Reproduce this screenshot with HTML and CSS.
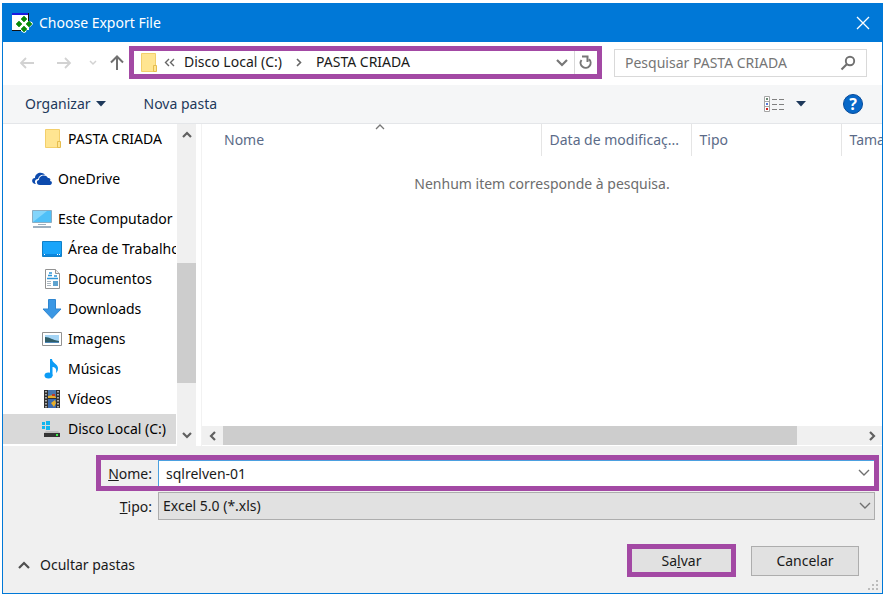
FILE: index.html
```html
<!DOCTYPE html>
<html lang="pt-BR">
<head>
    <meta charset="UTF-8">
    <meta name="viewport" content="width=device-width, initial-scale=1.0">
    <title>Choose Export File</title>
    <link rel="stylesheet" href="styles.css">
</head>
<body>
    <div class="dialog">
        <header class="titlebar">
            <svg width="22" height="20" viewBox="0 0 22 20">
                <path d="M0 0h17v17H0z" fill="#fff"/>
                <path d="M0 0h17v2H0z" fill="#1a1ae0"/>
                <path d="M16 0h1v8h-1zM0 17h9v1H0z" fill="#111"/>
                <path d="M12 2l3 2 1 4 4 1 1 2-3 3-3 1-1 4-2 1-3-2V8z" fill="#fff"/>
                <g fill="#0a8a0a">
                    <path d="M12 3l3 3-3 3-3-3zM7 8l3 3-3 3-3-3zM17 8l3 3-3 3-3-3zM12 13l3 3-3 3-3-3z" stroke="#0a8a0a" stroke-width=".6"/>
                </g>
            </svg>
            <h1>Choose Export File</h1>
            <button class="close" aria-label="Fechar">
                <svg width="14" height="14" viewBox="0 0 14 14"><path d="M1 1l12 12M13 1L1 13" stroke="#fff" stroke-width="1.3"/></svg>
            </button>
        </header>

        <nav class="navbar">
            <div class="history">
                <button class="go" aria-label="Voltar"><svg width="16" height="14" viewBox="0 0 16 14"><path d="M7 2L2 7l5 5M2 7h13" fill="none" stroke="#d2d2d2" stroke-width="1.800"/></svg></button>
                <button class="go" aria-label="Avançar"><svg width="16" height="14" viewBox="0 0 16 14"><path d="M9 2l5 5-5 5M14 7H1" fill="none" stroke="#d2d2d2" stroke-width="1.800"/></svg></button>
                <button class="recent" aria-label="Locais recentes"><svg width="8" height="6" viewBox="0 0 8 6"><path d="M1 1l3 3 3-3" fill="none" stroke="#d2d2d2" stroke-width="1.500"/></svg></button>
                <button class="up" aria-label="Acima"><svg width="16" height="16" viewBox="0 0 16 16"><path d="M2 7.500L8 1.500l6 6M8 2v13" fill="none" stroke="#707070" stroke-width="2"/></svg></button>
            </div>
            <div class="address highlight">
                <svg width="18" height="20" viewBox="0 0 18 20">
                    <path d="M1.500.500h14v18h-14z" fill="#ffe591" stroke="#f3cf6b"/>
                    <path d="M13.500 12.500h3v6h-3z" fill="#ffe591" stroke="#e5bd4f"/>
                </svg>
                <svg class="chev" width="11" height="9" viewBox="0 0 11 9"><path d="M5 1L1.500 4.500 5 8M10 1L6.500 4.500 10 8" fill="none" stroke="#666" stroke-width="1.400"/></svg>
                <a href="#">Disco Local (C:)</a>
                <svg class="sep" width="6" height="9" viewBox="0 0 6 9"><path d="M1 1l3.500 3.500L1 8" fill="none" stroke="#666" stroke-width="1.600"/></svg>
                <a href="#">PASTA CRIADA</a>
                <button class="drop" aria-label="Locais anteriores"><svg width="12" height="8" viewBox="0 0 12 8"><path d="M1 1l5 5 5-5" fill="none" stroke="#777" stroke-width="2.200"/></svg></button>
                <button class="refresh" aria-label="Atualizar"><svg width="14" height="15" viewBox="0 0 14 15"><path d="M2.500 5A5 5 0 1 0 10 4.200M3 1.500h5.500V7" fill="none" stroke="#777" stroke-width="2"/></svg></button>
            </div>
            <div class="search">
                <input type="text" placeholder="Pesquisar PASTA CRIADA" aria-label="Pesquisar PASTA CRIADA">
                <svg width="16" height="16" viewBox="0 0 16 16"><circle cx="10" cy="6" r="4.200" fill="none" stroke="#707070" stroke-width="1.900"/><path d="M7 9l-5.500 5.500" stroke="#707070" stroke-width="2.200"/></svg>
            </div>
        </nav>

        <div class="toolbar">
            <button class="organize">Organizar <svg width="10" height="6" viewBox="0 0 10 6"><path d="M0 0h10L5 5.500z" fill="#1e395b"/></svg></button>
            <button>Nova pasta</button>
            <button class="view" aria-label="Modo de exibição">
                <svg width="21" height="16" viewBox="0 0 21 16">
                    <path d="M1.500.500h5v15h-5zM1.500 5.500h5M1.500 10.500h5" fill="#fff" stroke="#a5a5a5"/>
                    <path d="M9 3.500h5M16 3.500h5M9 8.500h5M16 8.500h5M9 13.500h5M16 13.500h5" stroke="#808080"/>
                    <path d="M3 2h2v2H3z" fill="#6b8a75"/><path d="M3 7h2v2H3z" fill="#5577d8"/><path d="M3 12h2v2H3z" fill="#d02020"/>
                </svg>
                <svg width="10" height="6" viewBox="0 0 10 6"><path d="M0 0h10L5 5.500z" fill="#1e395b"/></svg>
            </button>
            <button class="help" aria-label="Ajuda">?</button>
        </div>

        <main class="browser">
            <ul class="tree">
                <li class="sub"><svg width="20" height="20" viewBox="0 0 20 20">
                    <path d="M3.500.500h14v18h-14z" fill="#ffe591" stroke="#f3cf6b"/>
                    <path d="M15.500 12.500h3v6h-3z" fill="#ffe591" stroke="#e5bd4f"/>
                </svg>PASTA CRIADA</li>
                <li class="root"><svg width="20" height="14" viewBox="0 0 20 14">
                    <path d="M4 12C-1 12-1 6 3 6c0-5 7-7 10-3-4-1-6 1-7 4-3 0-4 3-2 5z" fill="#0c4aad"/>
                    <path d="M8 13c-4 0-4-5-1-5 0-5 7-6 9-2 2 0 3 1 2 3 3 0 2 4 0 4z" fill="#0c4aad"/>
                </svg>OneDrive</li>
                <li class="root"><svg width="20" height="20" viewBox="0 0 20 20">
                    <path d="M.5 1.500h19v12H.5z" fill="#4fc0f8" stroke="#8badc2"/>
                    <path d="M1 13L15 2H1z" fill="#83d5fb"/>
                    <path d="M6 15h8v1H6zM1 17h18v2H1z" fill="#9eb0bf"/>
                </svg>Este Computador</li>
                <li class="sub"><svg width="20" height="16" viewBox="0 0 20 16">
                    <path d="M.5.500h19v15H.5z" fill="#1aa5fa" stroke="#1080c8"/>
                    <path d="M1 13h18v2H1z" fill="#0c86dd"/><path d="M2 13h1v1H2zM15 13h1v1h-1zM17 13h1v1h-1z" fill="#fff"/>
                </svg>Área de Trabalho</li>
                <li class="sub"><svg width="20" height="20" viewBox="0 0 20 20">
                    <path d="M3.500.500h10l4 4v15h-14z" fill="#fff" stroke="#929292"/>
                    <path d="M13.500.500v4h4" fill="#eee" stroke="#929292"/>
                    <path d="M7 4h3M6 6.500h4M12 7h3M5 9.500h11" stroke="#2d95d8" stroke-width="1.500"/>
                    <path d="M5 12.500h4M5 14.500h4M5 16.500h4" stroke="#aab6bf"/>
                    <path d="M11 12h5v5h-5z" fill="#5fa3cf"/>
                </svg>Documentos</li>
                <li class="sub"><svg width="20" height="20" viewBox="0 0 20 20"><path d="M6.500.500h7V10H19l-9 9.500L1 10h5.500z" fill="#3a97e4" stroke="#2f86d0"/></svg>Downloads</li>
                <li class="sub"><svg width="20" height="16" viewBox="0 0 20 16">
                    <path d="M.5 1.500h19v13H.5z" fill="#fff" stroke="#929292"/>
                    <path d="M3 4h14v8H3z" fill="#a4d4f5"/><path d="M3 6c5 0 7 3 14 4v2H3z" fill="#305d68"/><path d="M3 11h14v1H3z" fill="#4d87b8"/>
                </svg>Imagens</li>
                <li class="sub"><svg width="20" height="20" viewBox="0 0 20 20"><ellipse cx="6.500" cy="16.500" rx="4" ry="3" fill="#0d9cf5"/><path d="M8 0h2c0 4 6 5 6 9 0 3-1 4-2 5 1-4-1-6-3.500-6v9H8z" fill="#0d9cf5"/></svg>Músicas</li>
                <li class="sub"><svg width="20" height="20" viewBox="0 0 20 20">
                    <path d="M2 1h16v18H2z" fill="#303030"/>
                    <path d="M6 1h8v8H6z" fill="#4b78ad"/><path d="M6 10h8v9H6z" fill="#3a69b0"/>
                    <path d="M6 7l5-1 3 2v1H6zM9 14l4-3 1 3-2 4z" fill="#e8ae27"/><path d="M10 5h3v2h-3z" fill="#c13b26"/>
                    <path d="M4 2v17M16 2v17" stroke="#fff" stroke-width="1.200" stroke-dasharray="1.500 1.500"/>
                </svg>Vídeos</li>
                <li class="sub selected"><svg width="20" height="18" viewBox="0 0 20 18">
                    <path d="M0 2h3v3H0zM4 1h4v4H4zM0 6h3v3H0zM4 6h4v4H4z" fill="#12b5ee"/>
                    <path d="M4 11h12l2 2H2z" fill="#bdbdbd"/><path d="M2 13h16v4H2z" fill="#343434"/><path d="M14 14h2v2h-2z" fill="#3bee4a"/>
                </svg>Disco Local (C:)</li>
            </ul>

            <div class="vscroll">
                <button aria-label="Rolar para cima"><svg width="10" height="8" viewBox="0 0 10 8"><path d="M1 6l4-4 4 4" fill="none" stroke="#606060" stroke-width="2.200"/></svg></button>
                <div class="track"><div class="thumb"></div></div>
                <button aria-label="Rolar para baixo"><svg width="10" height="8" viewBox="0 0 10 8"><path d="M1 2l4 4 4-4" fill="none" stroke="#606060" stroke-width="2.200"/></svg></button>
            </div>

            <section class="files">
                <table>
                    <thead>
                        <tr>
                            <th class="name">Nome<svg class="sort" width="10" height="6" viewBox="0 0 10 6"><path d="M1 5l4-4 4 4" fill="none" stroke="#777" stroke-width="1.300"/></svg></th>
                            <th class="date">Data de modificaç...</th>
                            <th class="type">Tipo</th>
                            <th class="size">Tamanho</th>
                        </tr>
                    </thead>
                    <tbody>
                        <tr><td colspan="4">Nenhum item corresponde à pesquisa.</td></tr>
                    </tbody>
                </table>
                <div class="hscroll">
                    <button aria-label="Rolar para a esquerda"><svg width="8" height="10" viewBox="0 0 8 10"><path d="M6 1L2 5l4 4" fill="none" stroke="#606060" stroke-width="2.200"/></svg></button>
                    <div class="track"><div class="thumb"></div></div>
                    <button aria-label="Rolar para a direita"><svg width="8" height="10" viewBox="0 0 8 10"><path d="M2 1l4 4-4 4" fill="none" stroke="#606060" stroke-width="2.200"/></svg></button>
                </div>
            </section>
        </main>

        <form class="panel">
            <div class="field name-field highlight">
                <label for="fileName"><u>N</u>ome:</label>
                <div class="combo">
                    <input type="text" id="fileName" value="sqlrelven-01">
                    <svg width="12" height="8" viewBox="0 0 12 8"><path d="M1 1l5 5 5-5" fill="none" stroke="#707070" stroke-width="1.400"/></svg>
                </div>
            </div>
            <div class="field type-field">
                <label for="fileType"><u>T</u>ipo:</label>
                <div class="combo">
                    <select id="fileType"><option>Excel 5.0 (*.xls)</option></select>
                    <svg width="12" height="8" viewBox="0 0 12 8"><path d="M1 1l5 5 5-5" fill="none" stroke="#707070" stroke-width="1.400"/></svg>
                </div>
            </div>
            <div class="actions">
                <button type="button" class="toggle"><svg width="12" height="8" viewBox="0 0 12 8"><path d="M1 7l5-5 5 5" fill="none" stroke="#505050" stroke-width="2.200"/></svg>Ocultar pastas</button>
                <button type="button" class="btn highlight">Sa<u>l</u>var</button>
                <button type="button" class="btn cancel">Cancelar</button>
            </div>
            <svg class="grip" width="11" height="11" viewBox="0 0 11 11"><path d="M8 0h2v2H8zM4 4h2v2H4zM8 4h2v2H8zM0 8h2v2H0zM4 8h2v2H4zM8 8h2v2H8z" fill="#bcbcbc"/></svg>
        </form>
    </div>
</body>
</html>
```
FILE: styles.css
```css
* {
    box-sizing: border-box;
}
body {
    margin: 0;
    padding: 3px 5px 4px 2px;
    min-height: 100vh;
    display: flex;
    background: #fff;
    font-family: "Noto Sans", "Open Sans", sans-serif;
    font-size: 14px;
    line-height: 20px;
    color: #1a1a1a;
}
button, input, select {
    font: inherit;
    color: inherit;
    margin: 0;
    padding: 0;
    border: none;
    border-radius: 0;
    background: none;
    outline: none;
}
button {
    display: flex;
    align-items: center;
    justify-content: center;
}
svg {
    flex: none;
}
.highlight {
    border: 5px solid #a349a4;
}
.dialog {
    flex: 1;
    min-width: 0;
    display: flex;
    flex-direction: column;
    border: 1px solid #0078d7;
    background: #fff;
}

/* title bar */
.titlebar {
    height: 38px;
    display: flex;
    align-items: center;
    padding: 0 9px;
    background: #0078d7;
    color: #fff;
}
.titlebar h1 {
    flex: 1;
    margin: 0 0 0 5px;
    font-size: 14px;
    font-weight: normal;
}
.close {
    width: 20px;
    height: 20px;
}

/* navigation */
.navbar {
    height: 43px;
    display: flex;
    align-items: center;
    padding: 0 15px 2px 5px;
}
.history {
    width: 121px;
    display: flex;
    align-items: center;
}
.go {
    width: 37px;
}
.recent {
    width: 22px;
}
.up {
    width: 25px;
}
.address {
    flex: 1;
    height: 33px;
    display: flex;
    align-items: center;
    padding-left: 6px;
}
.address a {
    padding-bottom: 2px;
    color: inherit;
    text-decoration: none;
    white-space: nowrap;
}
.chev {
    margin: 0 9px 0 6px;
}
.sep {
    margin: 0 14px;
}
.drop {
    width: 24px;
    height: 23px;
    margin-left: auto;
}
.refresh {
    width: 23px;
    height: 23px;
    border-left: 1px solid #d9d9d9;
}
.search {
    width: 253px;
    height: 28px;
    margin-left: 12px;
    display: flex;
    align-items: center;
    padding: 0 10px;
    border: 1px solid #d9d9d9;
}
.search input {
    flex: 1;
    min-width: 0;
}
.search input::placeholder {
    color: #757575;
    opacity: 1;
}

/* command bar */
.toolbar {
    height: 39px;
    display: flex;
    align-items: center;
    padding: 0 19px 0 22px;
    border-bottom: 1px solid #e4e6e9;
    background: #f5f6f7;
    color: #1e395b;
}
.organize {
    gap: 5px;
    margin-right: 38px;
}
.view {
    gap: 12px;
    margin-left: auto;
}
.help {
    width: 20px;
    height: 20px;
    margin-left: 37px;
    border: 1px solid #064b9b;
    border-radius: 50%;
    background: #0868c8;
    color: #fff;
    font-size: 16px;
    font-weight: bold;
}

/* folder tree and file list */
.browser {
    flex: 1;
    min-height: 322px;
    display: flex;
}
.tree {
    width: 173px;
    margin: 0;
    padding: 0;
    list-style: none;
    overflow: hidden;
    color: #000;
}
.tree li {
    height: 30px;
    display: flex;
    align-items: center;
    gap: 6px;
    white-space: nowrap;
}
.tree .root {
    margin-top: 10px;
    padding-left: 29px;
}
.tree .sub {
    padding-left: 39px;
}
.tree .selected {
    background: #d9d9d9;
}
.vscroll {
    width: 19px;
    margin: 0 5px 0 1px;
    display: flex;
    flex-direction: column;
    background: #f0f0f0;
}
.vscroll button {
    width: 19px;
    height: 22px;
}
.track {
    flex: 1;
    display: flex;
}
.vscroll .track {
    flex-direction: column;
    justify-content: flex-end;
    padding-bottom: 41px;
}
.thumb {
    background: #cdcdcd;
}
.vscroll .thumb {
    height: 120px;
}
.files {
    flex: 1;
    min-width: 0;
    display: flex;
    flex-direction: column;
    overflow: hidden;
    border-left: 1px solid #f2f2f2;
}
table {
    width: 100%;
    table-layout: fixed;
    border-collapse: collapse;
}
th {
    height: 32px;
    padding: 0 0 0 8px;
    border-left: 1px solid #e5e5e5;
    font-weight: normal;
    text-align: left;
    white-space: nowrap;
    overflow: hidden;
    color: #5b6b88;
}
.name {
    position: relative;
    padding-left: 22px;
    border-left: none;
}
.sort {
    position: absolute;
    top: 0;
    left: 51%;
}
.date, .type {
    width: 150px;
}
.size {
    width: 41px;
}
td {
    padding: 18px 0 0;
    text-align: center;
    color: #6d6d6d;
}
.hscroll {
    height: 19px;
    margin: auto 0 1px;
    display: flex;
    background: #f0f0f0;
}
.hscroll button {
    width: 21px;
    height: 19px;
}
.hscroll .thumb {
    width: 90%;
}

/* file name, type and buttons */
.panel {
    position: relative;
    height: 147px;
    padding: 9px 3px 0 0;
    background: #f0f0f0;
}
.field {
    display: flex;
    align-items: center;
}
.field label {
    padding-top: 2px;
    text-align: right;
}
.combo {
    position: relative;
    flex: 1;
    display: flex;
    align-items: center;
    margin-left: 6px;
}
.combo input, .combo select {
    width: 100%;
    height: 26px;
    padding: 0 28px 0 7px;
}
.combo svg {
    position: absolute;
    right: 4px;
    pointer-events: none;
}
.name-field {
    height: 36px;
    margin-left: 93px;
}
.name-field label {
    width: 51px;
}
.name-field input {
    border: solid #4ba0e0;
    border-width: 1px 0 0 1px;
    background: #fff;
}
.type-field {
    margin: 1px 4px 0 0;
}
.type-field label {
    width: 149px;
}
.type-field select {
    height: 28px;
    padding-left: 4px;
    border: 1px solid #adadad;
    background: #e1e1e1;
    appearance: none;
}
.actions {
    display: flex;
    align-items: center;
    margin: 24px 20px 0 15px;
}
.toggle {
    gap: 10px;
    margin-right: auto;
    padding-top: 8px;
}
.btn {
    width: 109px;
    height: 33px;
    background: #e1e1e1;
}
.cancel {
    width: 108px;
    height: 30px;
    margin-left: 15px;
    border: 1px solid #adadad;
}
.grip {
    position: absolute;
    right: 3px;
    bottom: 2px;
}
```
